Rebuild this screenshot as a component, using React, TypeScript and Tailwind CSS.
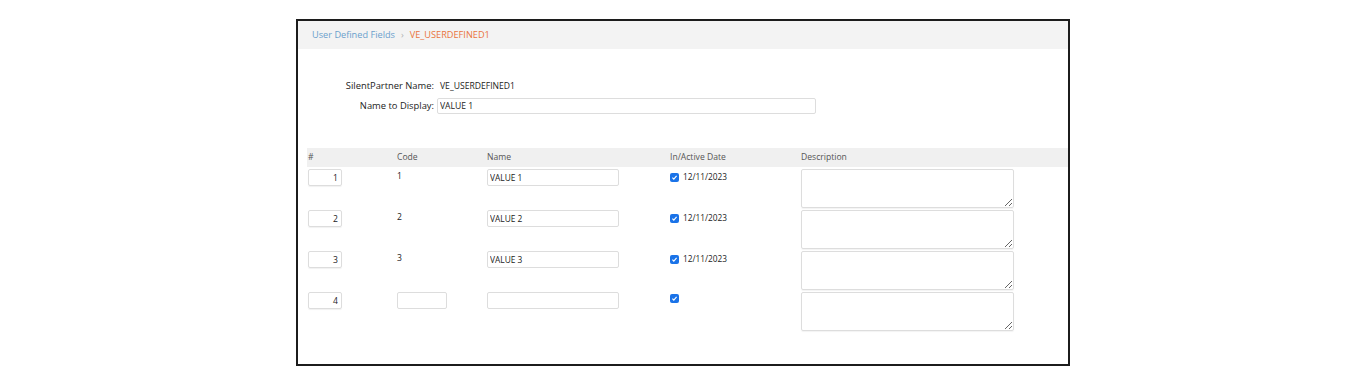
import React from 'react';

const rows = [
  { n: '1', code: '1', name: 'VALUE 1', date: '12/11/2023' },
  { n: '2', code: '2', name: 'VALUE 2', date: '12/11/2023' },
  { n: '3', code: '3', name: 'VALUE 3', date: '12/11/2023' },
  { n: '4', code: '', name: '', date: '' },
];

const Check = () => (
  <span className="w-[9px] h-[9px] rounded-[2px] bg-[#1a73e8] flex items-center justify-center shrink-0">
    <svg width="7" height="7" viewBox="0 0 8 8">
      <path d="M1.6 4.2 L3.2 5.8 L6.4 2.2" fill="none" stroke="#fff" strokeWidth="1.3" />
    </svg>
  </span>
);

const App = () => {
  return (
    <div className="w-[1366px] h-[382px] bg-white pt-[19px] pl-[296px]" style={{ fontFamily: '"Open Sans", sans-serif' }}>
      <div className="w-[774px] h-[347px] border-2 border-[#1c1c1c] flex flex-col">
        {/* breadcrumb */}
        <div className="h-[28px] bg-[#f3f3f3] flex items-center pl-[14px] text-[9.2px] gap-[6px]">
          <span className="text-[#6a9fcc]">User Defined Fields</span>
          <span className="text-[#b0b0b0]">›</span>
          <span className="text-[#ea7440]">VE_USERDEFINED1</span>
        </div>

        {/* form */}
        <div className="pt-[31px] text-[9.4px] text-[#222]">
          <div className="flex items-center h-[12px]">
            <span className="w-[136px] text-right">SilentPartner Name:</span>
            <span className="pl-[6px] text-[8.6px]">VE_USERDEFINED1</span>
          </div>
          <div className="flex items-center mt-[6px]">
            <span className="w-[136px] text-right">Name to Display:</span>
            <input
              className="ml-[3px] w-[379px] h-[16px] border border-[#ddd] rounded-[2px] px-[2px] text-[8.6px] text-[#222] outline-none"
              defaultValue="VALUE 1"
            />
          </div>
        </div>

        {/* table */}
        <div className="mt-[34px] ml-[9px] text-[8.6px] text-[#222]">
          <div className="h-[19px] bg-[#f0f0f0] flex items-center text-[#555]">
            <span className="w-[90px] pl-[1px]">#</span>
            <span className="w-[90px]">Code</span>
            <span className="w-[183px]">Name</span>
            <span className="w-[131px]">In/Active Date</span>
            <span>Description</span>
          </div>
          <div className="pt-[2px] flex flex-col gap-[2px]">
            {rows.map((r) => (
              <div key={r.n} className="flex items-start h-[39px]">
                <div className="w-[90px] pl-[1px]">
                  <input
                    className="w-[34px] h-[17px] border border-[#ddd] rounded-[2px] text-right pr-[3px] text-[8.6px] text-[#222] shadow-[0_1px_1px_rgba(0,0,0,0.06)] outline-none"
                    defaultValue={r.n}
                  />
                </div>
                <div className="w-[90px]">
                  {r.code ? (
                    <span className="block pt-[1px] leading-[12px]">{r.code}</span>
                  ) : (
                    <input className="w-[50px] h-[17px] border border-[#ddd] rounded-[2px] outline-none" />
                  )}
                </div>
                <div className="w-[182px]">
                  <input
                    className="w-[132px] h-[17px] border border-[#ddd] rounded-[2px] px-[2px] text-[8.4px] text-[#222] outline-none"
                    defaultValue={r.name}
                  />
                </div>
                <div className="w-[132px] flex items-center gap-[4px] pl-[1px] pt-[2px]">
                  <Check />
                  {r.date && <span className="leading-[12px] text-[8.3px]">{r.date}</span>}
                </div>
                <textarea className="w-[213px] h-[39px] border border-[#ddd] rounded-[2px] shadow-[0_1px_1px_rgba(0,0,0,0.05)] outline-none resize-y" />
              </div>
            ))}
          </div>
        </div>
      </div>
    </div>
  );
};

export default App;
